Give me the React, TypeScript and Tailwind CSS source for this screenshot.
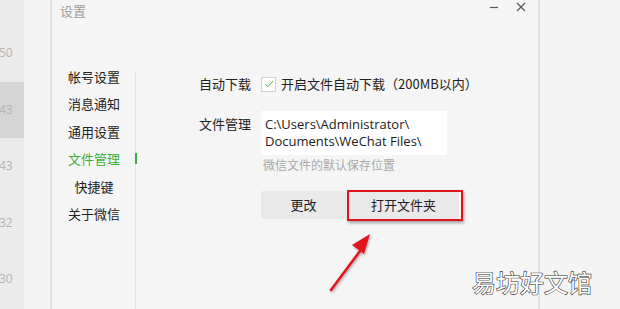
import React from 'react';

const cjk = { fontFamily: '"Noto Sans CJK SC", "Noto Sans", sans-serif' };
const latin = { fontFamily: '"Open Sans", "Noto Sans CJK SC", sans-serif' };

const chatRows = [
    { num: '50', active: false },
    { num: '43', active: true },
    { num: '43', active: false },
    { num: '32', active: false },
    { num: '30', active: false },
];

const navItems = ['帐号设置', '消息通知', '通用设置', '文件管理', '快捷键', '关于微信'];

const App: React.FC = () => {
    return (
        <div className="relative w-[620px] h-[309px] overflow-hidden flex bg-[#f5f5f5]" style={cjk}>
            {/* chat list strip behind the dialog */}
            <div className="w-[24px] h-full flex flex-col pt-[25px] bg-[#ebebeb]">
                {chatRows.map((row, i) => (
                    <div
                        key={i}
                        className={`h-[56.5px] flex items-center text-[12px] text-[#b4b4b4] -ml-[1px] ${row.active ? 'bg-[#d5d5d5]' : ''}`}
                        style={latin}
                    >
                        {row.num}
                    </div>
                ))}
            </div>
            <div className="w-[26px] h-full bg-[#f4f4f4]" />
            <div className="w-[2px] h-full bg-[#e0e0e0]" />

            {/* settings dialog */}
            <div className="w-[486px] h-full flex flex-col bg-[#f5f5f5]">
                <div className="h-[30px] flex items-start justify-between pl-[8px] pr-[12px] pt-[1px]">
                    <span className="text-[13px] text-[#a0a0a0]">设置</span>
                    <div className="flex items-center gap-[17px] pt-[1px]">
                        <svg width="10" height="10" viewBox="0 0 10 10"><path d="M1 5.5h8" stroke="#555" strokeWidth="1.2" /></svg>
                        <svg width="10" height="10" viewBox="0 0 10 10"><path d="M1 1l8 8M9 1l-8 8" stroke="#555" strokeWidth="1.2" /></svg>
                    </div>
                </div>
                <div className="flex flex-1">
                    <div className="w-[83px] pt-[33px] flex flex-col">
                        {navItems.map(item => (
                            <div
                                key={item}
                                className={`h-[27.4px] w-[84px] flex justify-center items-center whitespace-nowrap text-[13px] ${item === '文件管理' ? 'text-[#3fae3a]' : 'text-[#222]'}`}
                            >
                                {item}
                            </div>
                        ))}
                    </div>
                    <div className="relative w-[1px] mt-[42px] bg-[#e3e3e3]">
                        <div className="absolute left-0 top-[81px] w-[2px] h-[11px] bg-[#3fae3a]" />
                    </div>
                    <div className="flex-1 pl-[63px] pt-[46px] text-[13px] text-[#222]">
                        <div className="flex items-center h-[16px]">
                            <span className="w-[62px]">自动下载</span>
                            <div className="w-[15px] h-[15px] border border-[#d2d2d2] bg-white flex items-center justify-center">
                                <svg width="10" height="8" viewBox="0 0 10 8"><path d="M1 4l2.8 2.8L9 1" stroke="#52b94d" strokeWidth="1" fill="none" /></svg>
                            </div>
                            <span className="ml-[5px] whitespace-nowrap">开启文件自动下载（200MB以内）</span>
                        </div>
                        <div className="flex mt-[19px]">
                            <span className="w-[62px] pt-[3px]">文件管理</span>
                            <div>
                                <div className="w-[186px] h-[44px] bg-white pl-[4px] pt-[5px] text-[13px] leading-[17px] text-[#222]" style={latin}>
                                    <div>C:\Users\Administrator\</div>
                                    <div>Documents\WeChat Files\</div>
                                </div>
                                <div className="mt-[1px] pl-[2px] text-[12px] text-[#a8a8a8]">微信文件的默认保存位置</div>
                                <div className="flex mt-[17px] gap-[2px]">
                                    <div className="w-[85px] h-[28px] bg-[#e9e9e9] rounded-[2px] flex items-center justify-center">更改</div>
                                    <div className="relative w-[111px] h-[28px] bg-[#e9e9e9] flex items-center justify-center">
                                        打开文件夹
                                        <div className="absolute -left-[1px] -top-[1px] w-[116px] h-[31px] border-[2.5px] border-[#e0151b] shadow-[1px_2px_3px_rgba(0,0,0,0.35)]" />
                                    </div>
                                </div>
                            </div>
                        </div>
                    </div>
                </div>
            </div>
            <div className="w-[2px] h-full bg-[#e2e2e2]" />
            <div className="flex-1 h-full bg-[#f4f4f4]" />

            {/* red annotation arrow */}
            <svg className="absolute left-[322px] top-[228px]" width="60" height="70" viewBox="0 0 60 70">
                <defs>
                    <filter id="sh" x="-20%" y="-20%" width="150%" height="150%">
                        <feDropShadow dx="1" dy="1.5" stdDeviation="1" floodColor="#000" floodOpacity="0.3" />
                    </filter>
                </defs>
                <g filter="url(#sh)">
                    <path d="M9 62L41 19" stroke="#e0151b" strokeWidth="2.6" strokeLinecap="round" />
                    <path d="M48 6L30 17L42 26Z" fill="#e0151b" />
                </g>
            </svg>

            {/* watermark */}
            <div
                className="absolute left-[472px] top-[264px] text-[24px] text-white"
                style={{ ...cjk, WebkitTextStroke: '1.2px #333', paintOrder: 'stroke fill' }}
            >
                易坊好文馆
            </div>
        </div>
    );
};

export default App;
